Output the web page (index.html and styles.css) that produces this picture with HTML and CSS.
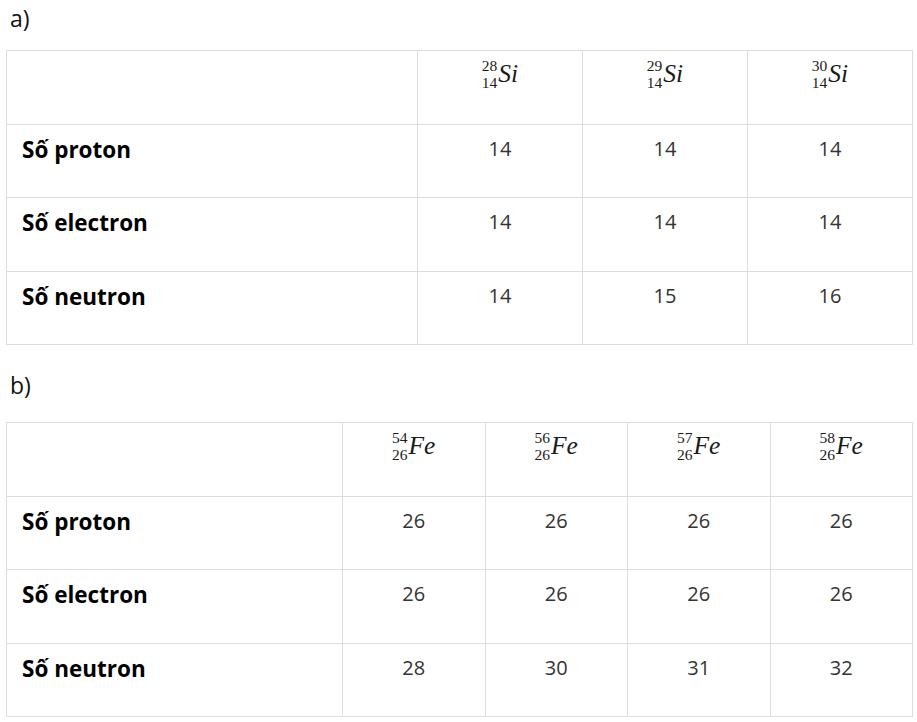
FILE: index.html
```html
<!DOCTYPE html>
<html lang="vi">
<head>
<meta charset="utf-8">
<title>Đồng vị</title>
<link rel="stylesheet" href="styles.css">
</head>
<body>
<p class="label label-a">a)</p>
<table class="iso iso-a">
  <colgroup><col class="c-first-a"><col><col><col></colgroup>
  <tr>
    <td></td>
    <td class="num"><span class="math"><span class="pre"><span class="sup">28</span><span class="sub">14</span></span><i>Si</i></span></td>
    <td class="num"><span class="math"><span class="pre"><span class="sup">29</span><span class="sub">14</span></span><i>Si</i></span></td>
    <td class="num"><span class="math"><span class="pre"><span class="sup">30</span><span class="sub">14</span></span><i>Si</i></span></td>
  </tr>
  <tr><td class="name">Số proton</td><td class="num">14</td><td class="num">14</td><td class="num">14</td></tr>
  <tr><td class="name">Số electron</td><td class="num">14</td><td class="num">14</td><td class="num">14</td></tr>
  <tr><td class="name">Số neutron</td><td class="num">14</td><td class="num">15</td><td class="num">16</td></tr>
</table>
<p class="label label-b">b)</p>
<table class="iso iso-b">
  <colgroup><col class="c-first-b"><col><col><col><col></colgroup>
  <tr>
    <td></td>
    <td class="num"><span class="math"><span class="pre"><span class="sup">54</span><span class="sub">26</span></span><i>Fe</i></span></td>
    <td class="num"><span class="math"><span class="pre"><span class="sup">56</span><span class="sub">26</span></span><i>Fe</i></span></td>
    <td class="num"><span class="math"><span class="pre"><span class="sup">57</span><span class="sub">26</span></span><i>Fe</i></span></td>
    <td class="num"><span class="math"><span class="pre"><span class="sup">58</span><span class="sub">26</span></span><i>Fe</i></span></td>
  </tr>
  <tr><td class="name">Số proton</td><td class="num">26</td><td class="num">26</td><td class="num">26</td><td class="num">26</td></tr>
  <tr><td class="name">Số electron</td><td class="num">26</td><td class="num">26</td><td class="num">26</td><td class="num">26</td></tr>
  <tr><td class="name">Số neutron</td><td class="num">28</td><td class="num">30</td><td class="num">31</td><td class="num">32</td></tr>
</table>
</body>
</html>
```
FILE: styles.css
```css
html, body {
  margin: 0;
  padding: 0;
  background: #fff;
}
body {
  padding: 0 4px 0 6px;
  font-family: "Open Sans", "Liberation Sans", sans-serif;
  font-size: 20px;
  line-height: 30px;
  color: #222;
}
.label {
  margin: 0;
  padding-left: 4px;
  font-size: 23px;
  line-height: 32px;
  color: #111;
}
.label-a {
  padding-top: 2px;
  margin-bottom: 16px;
}
.label-b {
  margin-top: 24px;
  margin-bottom: 21px;
}
.iso {
  width: 907px;
  border-collapse: collapse;
  table-layout: fixed;
}
.c-first-a { width: 411px; }
.c-first-b { width: 336px; }
.iso tr {
  height: 73.5px;
}
.iso td {
  border: 1px solid #dddddd;
  padding: 9px 15px 0;
  vertical-align: top;
}
.iso td.name {
  font-size: 22.5px;
  padding-top: 10px;
  font-weight: 700;
  color: #000;
}
.num {
  text-align: center;
  color: #333;
}
.math {
  font-family: "Liberation Serif", "DejaVu Serif", serif;
  font-size: 25.5px;
  line-height: 20px;
  color: #1a1a1a;
  white-space: nowrap;
}
.math i {
  font-style: italic;
}
.pre {
  display: inline-block;
  vertical-align: -6px;
  margin-top: -12px;
  font-size: 15.5px;
  line-height: 17.2px;
  text-align: left;
  margin-right: 1px;
}
.pre .sup,
.pre .sub {
  display: block;
}
```
